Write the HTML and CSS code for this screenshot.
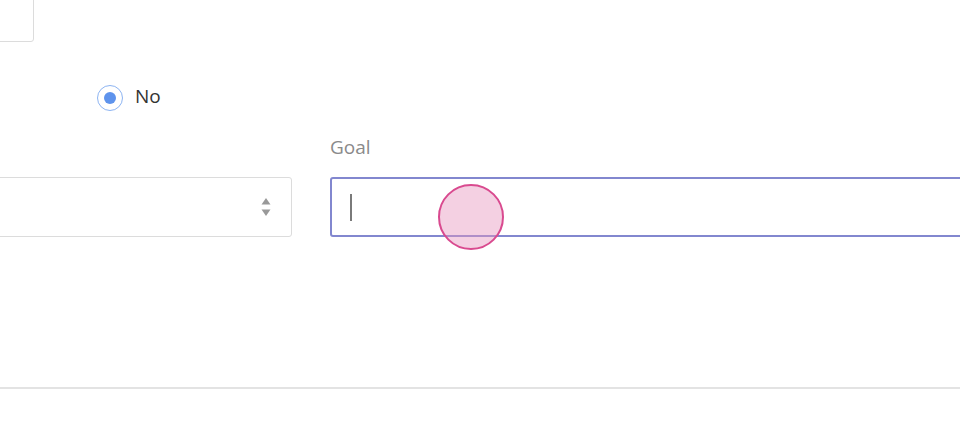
FILE: index.html
```html
<!DOCTYPE html>
<html>
<head>
<meta charset="utf-8">
<link rel="stylesheet" href="styles.css">
</head>
<body>
<div class="page">
  <div class="top-field"></div>
  <div class="radio-row">
    <label class="radio">
      <span class="radio-circle"><span class="radio-dot"></span></span>
      <span class="radio-text">No</span>
    </label>
  </div>
  <div class="fields">
    <div class="field field-select">
      <div class="label">&nbsp;</div>
      <div class="select">
        <svg class="arrows" width="10" height="20" viewBox="0 0 10 20">
          <path d="M5 1 L9.5 7.5 H0.5 Z" fill="#999"/>
          <path d="M5 19 L9.5 12.5 H0.5 Z" fill="#999"/>
        </svg>
      </div>
    </div>
    <div class="field field-goal">
      <div class="label">Goal</div>
      <div class="input"><span class="caret"></span></div>
    </div>
  </div>
  <div class="divider"></div>
  <div class="touch"></div>
</div>
</body>
</html>
```
FILE: styles.css
```css
html, body {
  margin: 0;
  padding: 0;
  background: #fff;
  overflow: hidden;
}
.page {
  position: relative;
  display: flow-root;
  width: 960px;
  height: 423px;
  overflow: hidden;
  font-family: "Open Sans", "Liberation Sans", sans-serif;
  font-size: 19px;
  color: #333;
}
.top-field {
  margin-left: -100px;
  margin-top: -10px;
  width: 132px;
  height: 50px;
  border: 1px solid #dcdcdc;
  border-radius: 3px;
}
.radio-row {
  display: flex;
  padding-left: 97px;
  margin-top: 43px;
}
.radio {
  display: flex;
  align-items: center;
  gap: 12px;
}
.radio-circle {
  width: 24px;
  height: 24px;
  border: 1px solid #8db4f2;
  border-radius: 50%;
  display: flex;
  align-items: center;
  justify-content: center;
}
.radio-dot {
  width: 12px;
  height: 12px;
  border-radius: 50%;
  background: #5e93ec;
}
.radio-text {
  line-height: 24px;
  margin-top: -5px;
}
.fields {
  display: flex;
  gap: 38px;
  margin-top: 25px;
  margin-left: -100px;
}
.field {
  display: flex;
  flex-direction: column;
}
.field-select {
  width: 392px;
}
.field-goal {
  flex: 1;
  margin-right: -100px;
}
.label {
  color: #8a8a8a;
  line-height: 22px;
  height: 24px;
  margin-bottom: 17px;
}
.select {
  height: 58px;
  border: 1px solid #dcdcdc;
  border-radius: 3px;
  display: flex;
  align-items: center;
  justify-content: flex-end;
  padding-right: 20px;
}
.arrows {
  display: block;
}
.input {
  height: 56px;
  border: 2px solid #8287cf;
  border-radius: 3px;
  display: flex;
  align-items: center;
  padding-left: 18px;
}
.caret {
  width: 2px;
  height: 27px;
  background: #7a7a7a;
}
.divider {
  margin-top: 150px;
  height: 2px;
  background: #e3e3e3;
}
.touch {
  position: absolute;
  left: 438px;
  top: 184px;
  width: 62px;
  height: 62px;
  border: 2px solid #d94a8f;
  border-radius: 50%;
  background: rgba(230, 150, 190, 0.45);
}
```
